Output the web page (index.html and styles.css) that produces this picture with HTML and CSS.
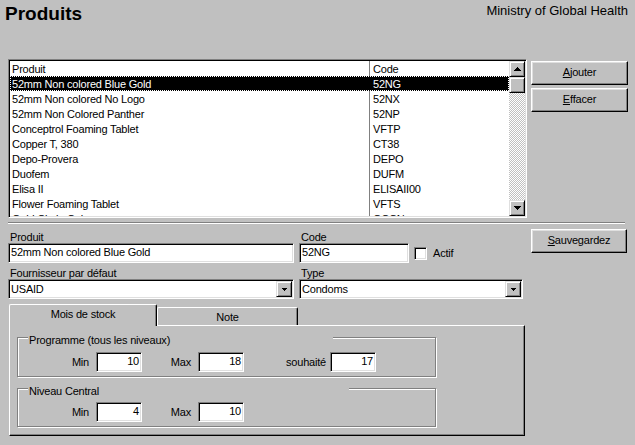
FILE: index.html
```html
<!DOCTYPE html>
<html lang="fr">
<head>
<meta charset="utf-8">
<title>Produits</title>
<link rel="stylesheet" href="styles.css">
</head>
<body>
  <header class="header">
    <h1 class="title">Produits</h1>
    <div class="org">Ministry of Global Health</div>
  </header>

  <section class="top">
    <div class="listbox">
      <div class="list">
        <div class="row"><span class="c1">Produit</span><span class="c2">Code</span></div>
        <div class="row sel"><span class="c1">52mm Non colored Blue Gold</span><span class="c2">52NG</span></div>
        <div class="row"><span class="c1">52mm Non colored No Logo</span><span class="c2">52NX</span></div>
        <div class="row"><span class="c1">52mm Non Colored Panther</span><span class="c2">52NP</span></div>
        <div class="row"><span class="c1">Conceptrol Foaming Tablet</span><span class="c2">VFTP</span></div>
        <div class="row"><span class="c1">Copper T, 380</span><span class="c2">CT38</span></div>
        <div class="row"><span class="c1">Depo-Provera</span><span class="c2">DEPO</span></div>
        <div class="row"><span class="c1">Duofem</span><span class="c2">DUFM</span></div>
        <div class="row"><span class="c1">Elisa II</span><span class="c2">ELISAII00</span></div>
        <div class="row"><span class="c1">Flower Foaming Tablet</span><span class="c2">VFTS</span></div>
        <div class="row"><span class="c1">Gold Circle Coin</span><span class="c2">GCCN</span></div>
      </div>
      <div class="scrollbar">
        <div class="sb-btn"><svg width="7" height="4" viewBox="0 0 7 4"><path d="M3 0h1v1h1v1h1v1h1v1H0V3h1V2h1V1h1z"/></svg></div>
        <div class="sb-btn"></div>
        <div class="sb-track"></div>
        <div class="sb-btn"><svg width="7" height="4" viewBox="0 0 7 4"><path d="M0 0h7v1H6v1H5v1H4v1H3V3H2V2H1V1H0z"/></svg></div>
      </div>
    </div>
    <div class="actions">
      <button class="btn"><u>A</u>jouter</button>
      <button class="btn"><u>E</u>ffacer</button>
    </div>
  </section>

  <div class="sep"></div>

  <section class="edit">
    <div class="form">
      <div class="lbl">Produit</div>
      <div class="lbl">Code</div>
      <div class="field">52mm Non colored Blue Gold</div>
      <div class="code-row">
        <div class="field code">52NG</div>
        <span class="check"></span>
        <span class="actif">Actif</span>
      </div>
      <div class="lbl lbl2">Fournisseur par défaut</div>
      <div class="lbl lbl2">Type</div>
      <div class="field combo">
        <span class="combo-text">USAID</span>
        <span class="combo-btn"><svg width="5" height="3" viewBox="0 0 5 3"><path d="M0 0h5v1H4v1H3v1H2V2H1V1H0z"/></svg></span>
      </div>
      <div class="field combo">
        <span class="combo-text">Condoms</span>
        <span class="combo-btn"><svg width="5" height="3" viewBox="0 0 5 3"><path d="M0 0h5v1H4v1H3v1H2V2H1V1H0z"/></svg></span>
      </div>
    </div>
    <div class="actions">
      <button class="btn save"><u>S</u>auvegardez</button>
    </div>
  </section>

  <section class="tabs">
    <div class="tabstrip">
      <div class="tab active">Mois de stock</div>
      <div class="tab">Note</div>
    </div>
    <div class="panel">
      <div class="group g1">
        <span class="legend l1">Programme (tous les niveaux)</span>
        <div class="fields">
          <span class="flbl">Min</span><span class="num">10</span>
          <span class="flbl">Max</span><span class="num">18</span>
          <span class="flbl wish">souhaité</span><span class="num">17</span>
        </div>
      </div>
      <div class="group g2">
        <span class="legend l2">Niveau Central</span>
        <div class="fields">
          <span class="flbl">Min</span><span class="num">4</span>
          <span class="flbl">Max</span><span class="num">10</span>
        </div>
      </div>
    </div>
  </section>
</body>
</html>
```

FILE: styles.css
```css
* { box-sizing: border-box; }
html, body { margin: 0; padding: 0; }
body {
  width: 635px;
  height: 445px;
  overflow: hidden;
  background: #c0c0c0;
  font-family: "Liberation Sans", Arial, sans-serif;
  font-size: 11px;
  letter-spacing: -0.2px;
  color: #000;
}

/* header */
.header {
  display: flex;
  justify-content: space-between;
  align-items: flex-start;
  height: 59px;
  padding: 0 7px 0 5px;
  letter-spacing: 0;
}
.title {
  margin: 0;
  padding-top: 3px;
  font-size: 19px;
  line-height: 22px;
  font-weight: bold;
}
.org {
  padding-top: 3px;
  font-size: 13px;
  line-height: 15px;
}

/* list area */
.top {
  display: flex;
  align-items: flex-start;
  padding-left: 8px;
  gap: 4px;
}
.listbox {
  display: flex;
  width: 519px;
  height: 159px;
  padding: 1px;
  border: 1px solid;
  border-color: #808080 #fff #fff #808080;
  box-shadow: inset 1px 1px #000, inset -1px -1px #dfdfdf;
}
.list {
  flex: 1;
  background: #fff;
  overflow: hidden;
}
.row {
  display: flex;
  height: 15px;
  white-space: nowrap;
}
.c1, .c2 {
  height: 15px;
  padding-top: 1px;
  line-height: 14px;
  overflow: hidden;
}
.c1 {
  width: 360px;
  padding-left: 2px;
  border-right: 1px solid #808080;
}
.c2 {
  flex: 1;
  padding-left: 3px;
}
.sel {
  background: #000;
  color: #fff;
  outline: 1px dotted #fff;
  outline-offset: -1px;
}
.sel .c1 { border-right-color: #000; }

.scrollbar {
  width: 16px;
  display: flex;
  flex-direction: column;
}
.sb-btn, .combo-btn {
  height: 16px;
  width: 16px;
  background: #c0c0c0;
  border: 1px solid;
  border-color: #dfdfdf #000 #000 #dfdfdf;
  box-shadow: inset 1px 1px #fff, inset -1px -1px #808080;
  display: flex;
  align-items: center;
  justify-content: center;
}
.sb-btn svg, .combo-btn svg { display: block; fill: #000; }
.sb-track {
  flex: 1;
  background: repeating-conic-gradient(#c0c0c0 0 25%, #fff 0 50%) 0 0 / 2px 2px;
}

/* buttons */
.actions {
  display: flex;
  flex-direction: column;
  gap: 3px;
  padding-top: 2px;
}
.btn {
  width: 97px;
  height: 24px;
  margin: 0;
  padding: 0 0 2px 0;
  font: inherit;
  letter-spacing: inherit;
  line-height: 16px;
  color: #000;
  background: #c0c0c0;
  border: 1px solid;
  border-color: #fff #000 #000 #fff;
  box-shadow: inset -1px -1px #808080, inset 1px 1px #dfdfdf;
  text-align: center;
}
.btn.save { width: 96px; }

/* separator */
.sep {
  margin: 4px 0 0 8px;
  width: 617px;
  height: 2px;
  border-top: 1px solid #808080;
  border-bottom: 1px solid #fff;
}

/* edit form */
.edit {
  display: flex;
  align-items: flex-start;
  gap: 8px;
  padding: 5px 0 0 8px;
}
.edit .actions { padding-top: 0; }
.form {
  display: grid;
  grid-template-columns: 286px 224px;
  grid-template-rows: 12px 20px 16px 20px;
  column-gap: 5px;
  margin-top: 2px;
}
.lbl {
  height: 12px;
  line-height: 12px;
  padding-left: 2px;
  white-space: nowrap;
}
.lbl2 {
  height: 16px;
  padding-top: 4px;
}
.field, .num, .check {
  background: #fff;
  border: 1px solid;
  border-color: #808080 #fff #fff #808080;
  box-shadow: inset 1px 1px #000, inset -1px -1px #dfdfdf;
}
.field {
  height: 20px;
  padding: 1px 2px 2px 2px;
  line-height: 14px;
  white-space: nowrap;
  overflow: hidden;
}
.code-row {
  display: flex;
  align-items: center;
}
.code { width: 110px; }
.check {
  width: 13px;
  height: 13px;
  margin-left: 5px;
}
.actif { margin-left: 6px; }
.combo {
  display: flex;
  padding: 1px;
}
.combo-text {
  flex: 1;
  padding: 0 0 0 1px;
  line-height: 16px;
}

/* tabs */
.tabs {
  margin: 5px 0 0 9px;
  width: 516px;
}
.tabstrip {
  display: flex;
  align-items: flex-end;
  height: 21px;
}
.tab {
  width: 141px;
  height: 18px;
  padding-top: 2px;
  line-height: 14px;
  text-align: center;
  background: #c0c0c0;
  border: 1px solid;
  border-bottom: none;
  border-color: #fff #000 #000 #fff;
  border-radius: 2px 2px 0 0;
  box-shadow: inset -1px 0 #808080;
}
.tab.active {
  width: 148px;
  height: 22px;
  margin-bottom: -1px;
  position: relative;
  z-index: 1;
}
.panel {
  height: 111px;
  padding: 11px 0 0 7px;
  border: 1px solid;
  border-color: #fff #000 #000 #fff;
  box-shadow: inset -1px -1px #808080;
}
.group {
  position: relative;
  width: 419px;
  border: 1px solid #808080;
  box-shadow: inset 1px 1px #fff, 1px 1px #fff;
}
.g1 { height: 40px; padding-top: 14px; }
.g2 { height: 39px; padding-top: 13px; margin-top: 11px; }
.legend {
  position: absolute;
  top: -4px;
  left: 10px;
  height: 12px;
  line-height: 12px;
  padding-left: 1px;
  background: #c0c0c0;
  white-space: nowrap;
}
.l1 { width: 305px; }
.l2 { width: 321px; }
.fields {
  display: grid;
  grid-template-columns: 78px 46px 56px 46px 86px 46px;
  align-items: center;
}
.flbl {
  text-align: right;
  padding-right: 7px;
  white-space: nowrap;
}
.flbl.wish { padding-right: 4px; }
.num {
  height: 20px;
  padding: 1px 2px 2px 2px;
  line-height: 15px;
  text-align: right;
}
```
